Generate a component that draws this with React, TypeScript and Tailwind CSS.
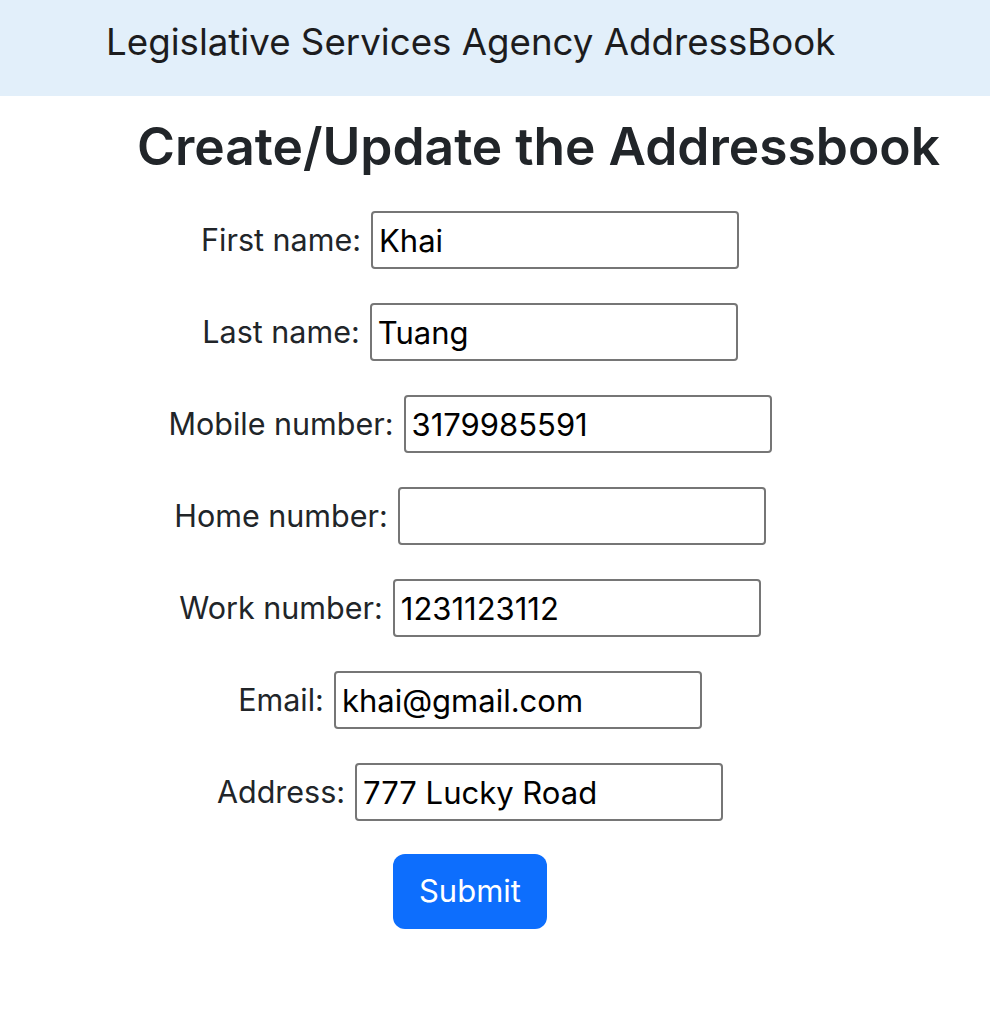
import React from 'react';

const fields = [
  { label: 'First name:', value: 'Khai' },
  { label: 'Last name:', value: 'Tuang' },
  { label: 'Mobile number:', value: '3179985591' },
  { label: 'Home number:', value: '' },
  { label: 'Work number:', value: '1231123112' },
  { label: 'Email:', value: 'khai@gmail.com' },
  { label: 'Address:', value: '777 Lucky Road' },
];

export default function App() {
  return (
    <div className="min-h-screen bg-white font-['Inter',sans-serif] text-[#212529]">
      <nav className="h-[96px] bg-[#e2effa] pl-[106px] pt-[16px]">
        <span className="text-[36.7px] leading-[52px] text-[#1c1c1e]">Legislative Services Agency AddressBook</span>
      </nav>
      <h1 className="pl-[137px] pt-[14px] text-[51.5px] leading-[72px] font-semibold">Create/Update the Addressbook</h1>
      <form className="mt-[29px] flex w-[940px] flex-col items-center gap-[34px]">
        {fields.map((f) => (
          <div key={f.label} className="flex items-center gap-[10px]">
            <label className="text-[30.5px]">{f.label}</label>
            <input
              type="text"
              defaultValue={f.value}
              className="h-[58px] w-[368px] rounded-[4px] border-2 border-[#767676] px-[6px] text-[31px] text-black"
            />
          </div>
        ))}
        <button type="button" className="mt-[-1px] h-[75px] w-[154px] rounded-[12px] bg-[#0d6efd] text-[31px] text-white">
          Submit
        </button>
      </form>
    </div>
  );
}
